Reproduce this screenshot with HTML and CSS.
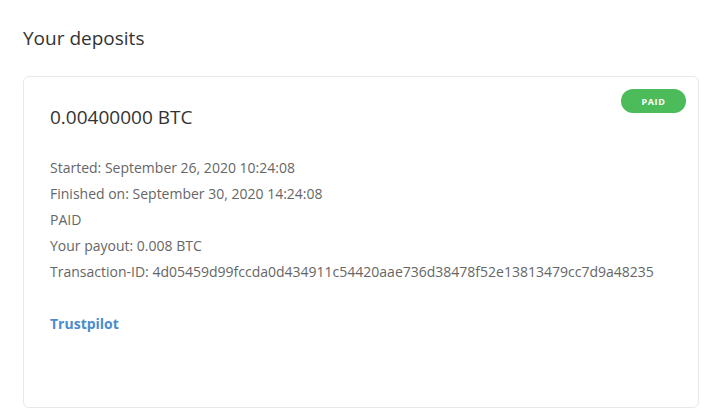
FILE: index.html
```html
<!DOCTYPE html>
<html>
<head>
<meta charset="utf-8">
<link rel="stylesheet" href="styles.css">
</head>
<body>
<div class="page">
  <h2 class="title">Your deposits</h2>
  <div class="card">
    <span class="badge">PAID</span>
    <div class="amount">0.00400000 BTC</div>
    <div class="details">
      <div class="row">Started: September 26, 2020 10:24:08</div>
      <div class="row">Finished on: September 30, 2020 14:24:08</div>
      <div class="row">PAID</div>
      <div class="row">Your payout: 0.008 BTC</div>
      <div class="row">Transaction-ID: 4d05459d99fccda0d434911c54420aae736d38478f52e13813479cc7d9a48235</div>
    </div>
    <a class="link" href="#">Trustpilot</a>
  </div>
</div>
</body>
</html>
```
FILE: styles.css
```css
html, body {
  margin: 0;
  padding: 0;
  background: #fff;
  font-family: "Open Sans", "Liberation Sans", sans-serif;
}
.page {
  padding: 24px 25px 0 23px;
}
.title {
  margin: 0;
  font-size: 19px;
  font-weight: 400;
  line-height: 28px;
  color: #333;
}
.card {
  position: relative;
  margin-top: 24px;
  border: 1px solid #e8e8e8;
  border-radius: 6px;
  padding: 0 26px;
  box-sizing: border-box;
  height: 332px;
}
.badge {
  position: absolute;
  top: 12px;
  right: 12px;
  width: 65px;
  height: 24px;
  border-radius: 12px;
  background: #4cbb5a;
  color: #fff;
  font-size: 9px;
  font-weight: 700;
  letter-spacing: 0.6px;
  display: flex;
  align-items: center;
  justify-content: center;
}
.amount {
  margin-top: 27px;
  font-size: 19px;
  line-height: 26px;
  color: #333;
}
.details {
  margin-top: 25px;
  font-size: 14px;
  line-height: 26px;
  color: #666;
}
.link {
  display: inline-block;
  margin-top: 26px;
  font-size: 14px;
  font-weight: 700;
  line-height: 26px;
  color: #4a8ccc;
  text-decoration: none;
}
```
